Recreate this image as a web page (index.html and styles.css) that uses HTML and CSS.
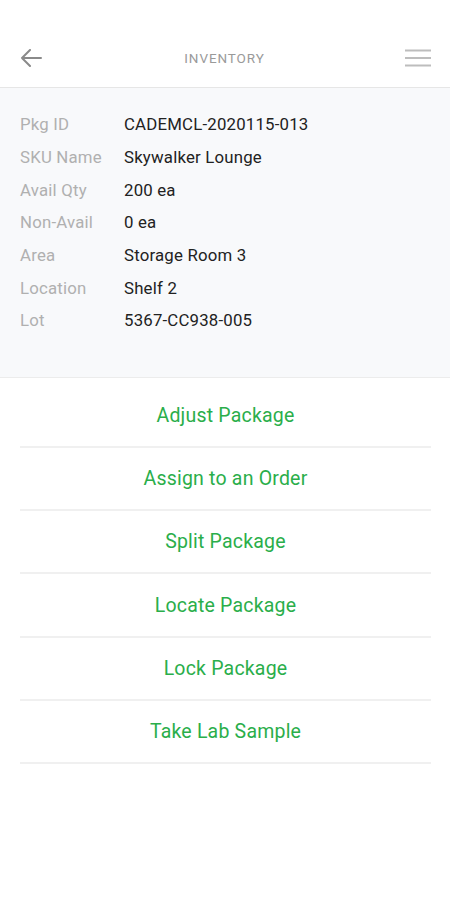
FILE: index.html
```html
<!DOCTYPE html>
<html>
<head>
<meta charset="utf-8">
<link rel="stylesheet" href="styles.css">
</head>
<body>
<div class="app">
  <header class="topbar">
    <svg class="back" width="22" height="18" viewBox="0 0 22 18"><path d="M21 9H2M10 1L2 9l8 8" fill="none" stroke="#8a8a8a" stroke-width="2" stroke-linecap="round" stroke-linejoin="round"/></svg>
    <div class="title">INVENTORY</div>
    <svg class="menu" width="26" height="18" viewBox="0 0 26 18"><path d="M0 1.5h26M0 9h26M0 16.5h26" stroke="#bdbdbd" stroke-width="2"/></svg>
  </header>
  <section class="info">
    <div class="row"><span class="label">Pkg ID</span><span class="value">CADEMCL-2020115-013</span></div>
    <div class="row"><span class="label">SKU Name</span><span class="value">Skywalker Lounge</span></div>
    <div class="row"><span class="label">Avail Qty</span><span class="value">200 ea</span></div>
    <div class="row"><span class="label">Non-Avail</span><span class="value">0 ea</span></div>
    <div class="row"><span class="label">Area</span><span class="value">Storage Room 3</span></div>
    <div class="row"><span class="label">Location</span><span class="value">Shelf 2</span></div>
    <div class="row"><span class="label">Lot</span><span class="value">5367-CC938-005</span></div>
  </section>
  <nav class="actions">
    <div class="action">Adjust Package</div>
    <div class="action">Assign to an Order</div>
    <div class="action">Split Package</div>
    <div class="action">Locate Package</div>
    <div class="action">Lock Package</div>
    <div class="action">Take Lab Sample</div>
  </nav>
</div>
</body>
</html>
```
FILE: styles.css
```css
* { box-sizing: border-box; }
html, body { margin: 0; padding: 0; background: #fff; }
body { font-family: Roboto, "Noto Sans", sans-serif; }
.app { width: 450px; min-height: 900px; background: #fff; }
.topbar {
  height: 88px;
  padding: 28px 19px 0 20px;
  display: flex;
  align-items: center;
  justify-content: space-between;
  border-bottom: 1px solid #e6e6e6;
}
.title {
  font-size: 13.5px;
  color: #9a9a9a;
  letter-spacing: 0.9px;
  margin-left: 2px;
}
.info {
  background: #f8f9fb;
  padding: 20px 20px 40px;
  border-bottom: 1px solid #ececec;
}
.row {
  display: flex;
  height: 32.7px;
  align-items: center;
  font-size: 16.8px;
  letter-spacing: 0.2px;
}
.label { width: 104px; color: #b0b0b0; }
.value { color: #222; }
.actions { padding: 8px 19px 0 20px; }
.action {
  height: 63.3px;
  display: flex;
  align-items: center;
  justify-content: center;
  font-size: 19.5px;
  letter-spacing: 0.2px;
  color: #2aae4a;
  border-bottom: 2px solid #f0f0f0;
}
.action:first-child { height: 62px; }
```
